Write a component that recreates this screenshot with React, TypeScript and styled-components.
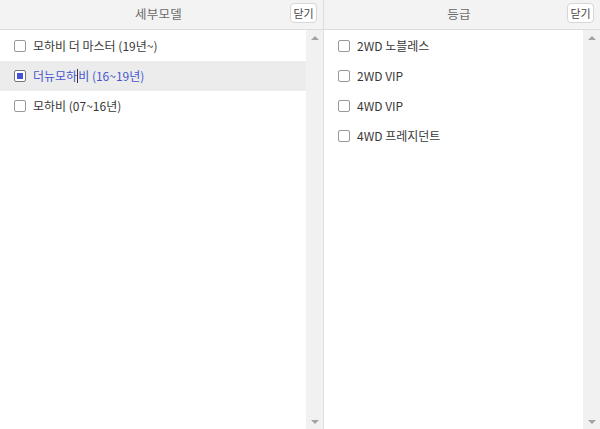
import React from "react";
import styled, { createGlobalStyle } from "styled-components";

const Global = createGlobalStyle`
  html, body { margin: 0; padding: 0; background: #fff; }
  body { font-family: "Noto Sans CJK KR", "Noto Sans", sans-serif; }
  * { box-sizing: border-box; }
`;

const Page = styled.div`
  display: flex;
  width: 600px;
  height: 429px;
  background: #fff;
`;

const Panel = styled.section<{ $w: number; $border?: boolean }>`
  width: ${(p) => p.$w}px;
  display: flex;
  flex-direction: column;
  border-right: ${(p) => (p.$border ? "1px solid #dedede" : "none")};
`;

const Header = styled.div`
  height: 30px;
  flex: none;
  display: grid;
  grid-template-columns: 1fr auto 1fr;
  align-items: center;
  background: #f3f3f3;
  border-bottom: 1px solid #dcdcdc;
  padding-right: 6px;
`;

const Title = styled.div`
  grid-column: 2;
  font-size: 12.5px;
  color: #6b6b6b;
  letter-spacing: 0.2px;
  margin-top: -3px;
`;

const CloseBtn = styled.button`
  grid-column: 3;
  justify-self: end;
  width: 27px;
  height: 20px;
  margin-top: -4px;
  padding: 0;
  border: 1px solid #d6d6d6;
  border-radius: 4px;
  background: #fff;
  font-family: "Noto Sans CJK KR", sans-serif;
  font-size: 11px;
  color: #444;
  line-height: 16px;
`;

const Body = styled.div`
  flex: 1;
  display: flex;
  min-height: 0;
`;

const List = styled.ul`
  flex: 1;
  margin: 0;
  padding: 1px 0 0;
  list-style: none;
`;

const Row = styled.li<{ $sel?: boolean }>`
  height: 30px;
  display: flex;
  align-items: center;
  padding-left: 14px;
  gap: 7px;
  background: ${(p) => (p.$sel ? "#ececec" : "transparent")};
  color: ${(p) => (p.$sel ? "#4957cf" : "#383838")};
  font-size: 12px;
`;

const Check = styled.span<{ $on?: boolean }>`
  width: 12px;
  height: 12px;
  flex: none;
  border: 1px solid ${(p) => (p.$on ? "#777" : "#9a9a9a")};
  border-radius: 2px;
  background: #fff;
  display: flex;
  align-items: center;
  justify-content: center;
  &::after {
    content: "";
    display: ${(p) => (p.$on ? "block" : "none")};
    width: 6px;
    height: 6px;
    background: #4352d6;
  }
`;

const Label = styled.span`
  margin-top: -2px;
  white-space: nowrap;
`;

const Caret = styled.span`
  display: inline-block;
  width: 1px;
  height: 14px;
  background: #333;
  vertical-align: -2px;
`;

const Scrollbar = styled.div`
  width: 17px;
  flex: none;
  background: #f1f1f1;
  display: flex;
  flex-direction: column;
  justify-content: space-between;
  align-items: center;
  padding: 6px 0 5px;
`;

const Arrow = styled.span<{ $down?: boolean }>`
  width: 0;
  height: 0;
  border-left: 4px solid transparent;
  border-right: 4px solid transparent;
  ${(p) =>
    p.$down
      ? "border-top: 4px solid #a3a3a3;"
      : "border-bottom: 4px solid #a3a3a3;"}
`;

type Item = { label: React.ReactNode; sel?: boolean };

const left: Item[] = [
  { label: "모하비 더 마스터 (19년~)" },
  {
    label: (
      <>
        더뉴모하<Caret />비 (16~19년)
      </>
    ),
    sel: true,
  },
  { label: "모하비 (07~16년)" },
];

const right: Item[] = [
  { label: "2WD 노블레스" },
  { label: "2WD VIP" },
  { label: "4WD VIP" },
  { label: "4WD 프레지던트" },
];

function Column({
  title,
  items,
  width,
  border,
}: {
  title: string;
  items: Item[];
  width: number;
  border?: boolean;
}) {
  return (
    <Panel $w={width} $border={border}>
      <Header>
        <Title>{title}</Title>
        <CloseBtn>닫기</CloseBtn>
      </Header>
      <Body>
        <List>
          {items.map((it, i) => (
            <Row key={i} $sel={it.sel}>
              <Check $on={it.sel} />
              <Label>{it.label}</Label>
            </Row>
          ))}
        </List>
        <Scrollbar>
          <Arrow />
          <Arrow $down />
        </Scrollbar>
      </Body>
    </Panel>
  );
}

export default function App() {
  return (
    <>
      <Global />
      <Page>
        <Column title="세부모델" items={left} width={324} border />
        <Column title="등급" items={right} width={276} />
      </Page>
    </>
  );
}
